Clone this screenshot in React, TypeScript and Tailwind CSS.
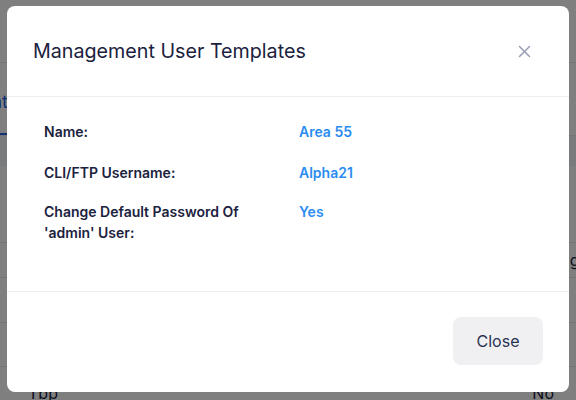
import { useState } from "react";

/* ===================== DATA ===================== */
const details = [
  { label: "Name:", value: "Area 55", gap: "mb-[20px]" },
  { label: "CLI/FTP Username:", value: "Alpha21", gap: "mb-[18px]" },
  { label: "Change Default Password Of 'admin' User:", value: "Yes", gap: "" },
];

/* ===================== PAGE ===================== */
export default function App() {
  const [open, setOpen] = useState(true);

  return (
    <div className="relative h-[400px] w-[576px] overflow-hidden bg-white font-['Inter',sans-serif] text-[#1b2240]">
      {/* ================= BACKGROUND PAGE ================= */}
      <div className="h-[63px] border-b border-[#e5e7eb]" />
      <div className="flex h-[73px] items-center border-b border-[#e5e7eb]">
        <div className="flex h-full w-[8px] items-center justify-end border-b-2 border-[#2563eb]">
          <span className="whitespace-nowrap pt-[8px] text-lg text-[#2563eb]">Format</span>
        </div>
      </div>
      <div className="h-[30px] bg-[#f3f4f6]" />
      <div className="h-[77px] border-b border-[#e5e7eb]" />
      <div className="flex h-[35px] items-center justify-end border-b border-[#e5e7eb]">
        <span className="-mr-[12px] whitespace-nowrap text-base">Settings</span>
      </div>
      <div className="h-[45px] border-b border-[#e5e7eb]" />
      <div className="h-[44px] border-b border-[#e5e7eb]" />
      <div className="flex justify-between pl-[28px] pr-[22px] pt-[14px] text-base">
        <span>Tbp</span>
        <span>No</span>
      </div>

      {/* ================= MODAL ================= */}
      {open && (
        <div className="absolute inset-0 bg-black/50">
          <div className="ml-[7px] mt-[6px] w-[562px] rounded-lg bg-white">
            <div className="flex h-[91px] items-center justify-between border-b border-[#ebedf0] pl-[26px] pr-[38px]">
              <h3 className="text-[19.7px] font-normal leading-7 text-[#1b2240]">
                Management User Templates
              </h3>
              <button onClick={() => setOpen(false)} className="text-[#959bb4]">
                <svg width="13" height="13" viewBox="0 0 13 13" fill="none">
                  <path
                    d="M1.5 1.5 L11.5 11.5 M11.5 1.5 L1.5 11.5"
                    stroke="currentColor"
                    strokeWidth="1.5"
                    strokeLinecap="round"
                  />
                </svg>
              </button>
            </div>

            <div className="h-[195px] border-b border-[#ebedf0] px-[37px] pt-[24px]">
              {details.map((d) => (
                <div
                  key={d.label}
                  className={`flex text-sm font-semibold leading-[21px] ${d.gap}`}
                >
                  <div className="w-[255px] pr-[45px] text-[#1b2240]">{d.label}</div>
                  <div className="text-[#2b8cf0]">{d.value}</div>
                </div>
              ))}
            </div>

            <div className="flex h-[100px] items-start justify-end pr-[26px] pt-[25px]">
              <button
                onClick={() => setOpen(false)}
                className="h-[48px] w-[90px] rounded-lg bg-[#f0f0f3] text-base text-[#2a3352]"
              >
                Close
              </button>
            </div>
          </div>
        </div>
      )}
    </div>
  );
}
